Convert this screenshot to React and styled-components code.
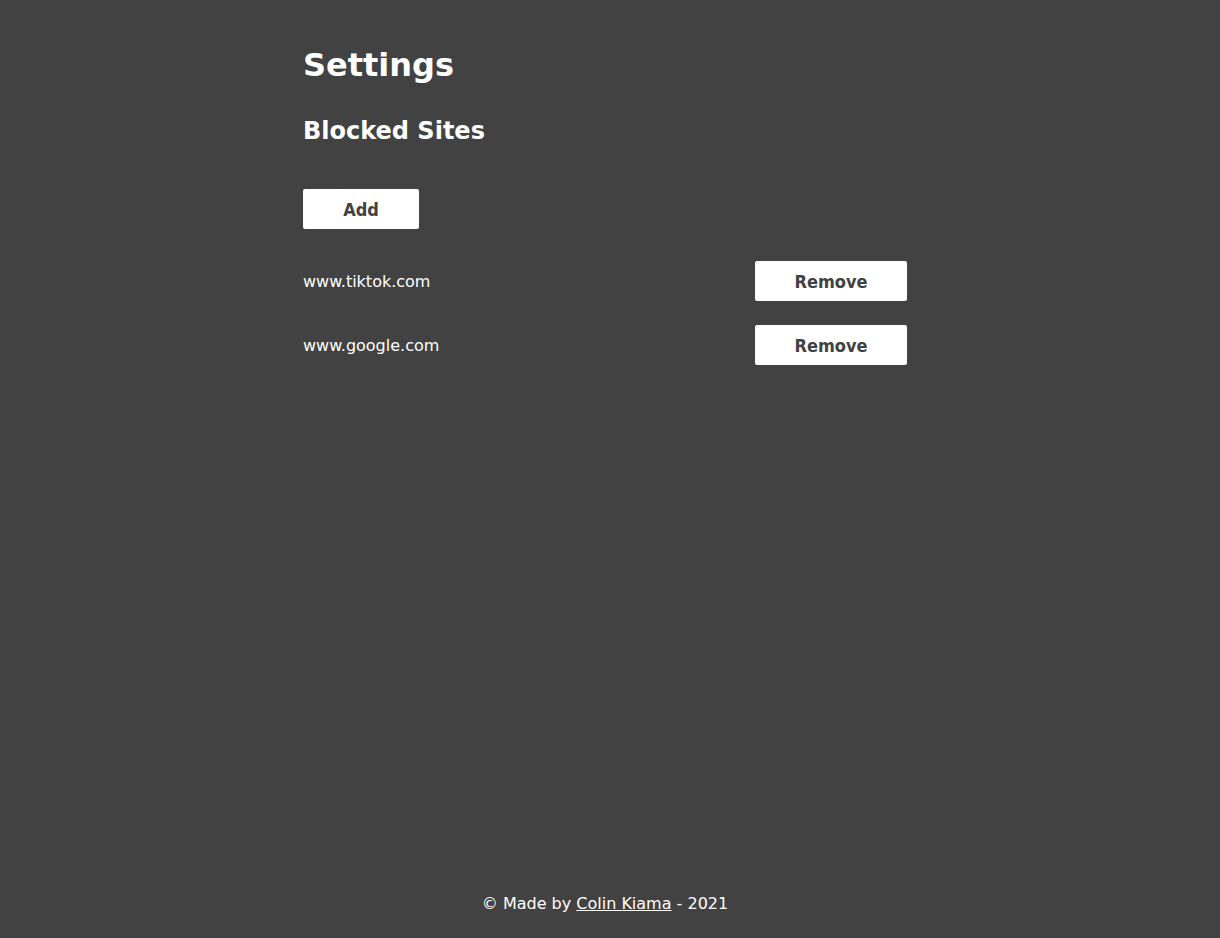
import React from "react"
import styled, { createGlobalStyle } from "styled-components"

const GlobalStyle = createGlobalStyle`
  html, body {
    margin: 0;
    padding: 0;
    background: #424242;
    color: #ffffff;
    font-family: "DejaVu Sans", sans-serif;
  }
`

const sites = ["www.tiktok.com", "www.google.com"]

const App = () => (
  <>
    <GlobalStyle />
    <Page>
      <Main>
        <Title>Settings</Title>
        <SectionTitle>Blocked Sites</SectionTitle>
        <Button $width={116}>Add</Button>
        <SiteList>
          {sites.map(site => (
            <SiteRow key={site}>
              <SiteName>{site}</SiteName>
              <Button $width={152}>Remove</Button>
            </SiteRow>
          ))}
        </SiteList>
      </Main>
      <Footer>
        © Made by <FooterLink href="#">Colin Kiama</FooterLink> - 2021
      </Footer>
    </Page>
  </>
)

export default App

const Page = styled.div`
  width: 1210px;
  min-height: 938px;
  display: flex;
  flex-direction: column;
`

const Main = styled.main`
  width: 604px;
  margin: 0 auto;
  flex: 1;
  display: flex;
  flex-direction: column;
  align-items: flex-start;
`

const Title = styled.h1`
  font-size: 32px;
  font-weight: bold;
  margin: 45px 0 0;
  line-height: 40px;
`

const SectionTitle = styled.h2`
  font-size: 24px;
  font-weight: bold;
  margin: 31px 0 43px;
  line-height: 30px;
`

const Button = styled.button`
  width: ${props => props.$width}px;
  height: 40px;
  background: #ffffff;
  color: #424242;
  border: none;
  border-radius: 2px;
  font-family: "DejaVu Sans Condensed", sans-serif;
  font-weight: bold;
  font-size: 18px;
  padding: 0;
  cursor: pointer;
`

const SiteList = styled.ul`
  list-style: none;
  margin: 32px 0 0;
  padding: 0;
  width: 100%;
  display: flex;
  flex-direction: column;
  gap: 24px;
`

const SiteRow = styled.li`
  display: flex;
  justify-content: space-between;
  align-items: center;
`

const SiteName = styled.span`
  font-size: 16px;
`

const Footer = styled.footer`
  text-align: center;
  font-size: 16px;
  padding-bottom: 25px;
`

const FooterLink = styled.a`
  color: #ffffff;
  text-decoration: underline;
`
